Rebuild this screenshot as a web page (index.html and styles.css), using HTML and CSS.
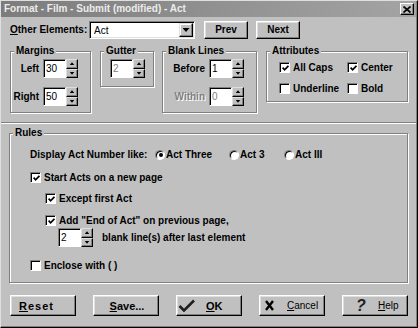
FILE: index.html
```html
<!DOCTYPE html>
<html>
<head>
<meta charset="utf-8">
<title>Format - Film - Submit (modified) - Act</title>
<link rel="stylesheet" href="styles.css">
</head>
<body>
<div class="window">
  <div class="titlebar">
    <span class="title">Format - Film - Submit (modified) - Act</span>
    <span class="close"><svg width="8" height="7" viewBox="0 0 8 7"><path d="M0.5 0.5 L7.5 6.5 M7.5 0.5 L0.5 6.5" stroke="#000" stroke-width="1.7" fill="none"/></svg></span>
  </div>

  <div class="top">
    <div class="row1">
      <span class="lbl-other"><u>O</u>ther Elements:</span>
      <div class="combo"><span class="combo-text">Act</span><span class="combo-btn"><i class="tri-down big"></i></span></div>
      <button class="btn nav prev">Prev</button>
      <button class="btn nav next">Next</button>
    </div>

    <div class="groups">
      <div class="group g-margins">
        <span class="legend">Margins</span>
        <div class="frow"><span class="flabel w28">Left</span>
          <div class="spin"><span class="sp-input">30</span><span class="sp-btns"><span class="sp-b"><i class="tri-up"></i></span><span class="sp-b"><i class="tri-down"></i></span></span></div>
        </div>
        <div class="frow"><span class="flabel w28">Right</span>
          <div class="spin"><span class="sp-input">50</span><span class="sp-btns"><span class="sp-b"><i class="tri-up"></i></span><span class="sp-b"><i class="tri-down"></i></span></span></div>
        </div>
      </div>

      <div class="group g-gutter">
        <span class="legend">Gutter</span>
        <div class="spin"><span class="sp-input dis">2</span><span class="sp-btns"><span class="sp-b"><i class="tri-up"></i></span><span class="sp-b"><i class="tri-down"></i></span></span></div>
      </div>

      <div class="group g-blank">
        <span class="legend">Blank Lines</span>
        <div class="frow"><span class="flabel w42">Before</span>
          <div class="spin"><span class="sp-input">1</span><span class="sp-btns"><span class="sp-b"><i class="tri-up"></i></span><span class="sp-b"><i class="tri-down"></i></span></span></div>
        </div>
        <div class="frow"><span class="flabel w42 disabled">Within</span>
          <div class="spin"><span class="sp-input dis">0</span><span class="sp-btns"><span class="sp-b"><i class="tri-up"></i></span><span class="sp-b"><i class="tri-down"></i></span></span></div>
        </div>
      </div>

      <div class="group g-attr">
        <span class="legend">Attributes</span>
        <span class="check"><span class="cb"><svg class="tick" width="7" height="7" viewBox="0 0 7 7"><path d="M0.6 2.6 L2.6 4.8 L6.4 0.8" stroke="#000" stroke-width="1.7" fill="none"/></svg></span>All Caps</span>
        <span class="check"><span class="cb"><svg class="tick" width="7" height="7" viewBox="0 0 7 7"><path d="M0.6 2.6 L2.6 4.8 L6.4 0.8" stroke="#000" stroke-width="1.7" fill="none"/></svg></span>Center</span>
        <span class="check"><span class="cb"></span>Underline</span>
        <span class="check"><span class="cb"></span>Bold</span>
      </div>
    </div>
  </div>

  <div class="sep"></div>

  <div class="bottom">
    <div class="group g-rules">
      <span class="legend">Rules</span>
      <div class="rrow r-display">
        <span class="disp-label">Display Act Number like:</span>
        <span class="radio-item w74"><span class="rb on"></span>Act Three</span>
        <span class="radio-item w55"><span class="rb"></span>Act 3</span>
        <span class="radio-item"><span class="rb"></span>Act III</span>
      </div>
      <div class="rrow r-start">
        <span class="check"><span class="cb"><svg class="tick" width="7" height="7" viewBox="0 0 7 7"><path d="M0.6 2.6 L2.6 4.8 L6.4 0.8" stroke="#000" stroke-width="1.7" fill="none"/></svg></span>Start Acts on a new page</span>
      </div>
      <div class="rrow r-except indent">
        <span class="check"><span class="cb"><svg class="tick" width="7" height="7" viewBox="0 0 7 7"><path d="M0.6 2.6 L2.6 4.8 L6.4 0.8" stroke="#000" stroke-width="1.7" fill="none"/></svg></span>Except first Act</span>
      </div>
      <div class="rrow r-add indent">
        <span class="check"><span class="cb"><svg class="tick" width="7" height="7" viewBox="0 0 7 7"><path d="M0.6 2.6 L2.6 4.8 L6.4 0.8" stroke="#000" stroke-width="1.7" fill="none"/></svg></span>Add "End of Act" on previous page,</span>
      </div>
      <div class="rrow r-spin">
        <div class="spin"><span class="sp-input">2</span><span class="sp-btns"><span class="sp-b"><i class="tri-up"></i></span><span class="sp-b"><i class="tri-down"></i></span></span></div>
        <span class="after">blank line(s) after last element</span>
      </div>
      <div class="rrow r-enclose">
        <span class="check"><span class="cb"></span>Enclose with ( )</span>
      </div>
    </div>

    <div class="buttons">
      <button class="btn big b-reset"><span><u>R</u>eset</span></button>
      <button class="btn big b-save"><span><u>S</u>ave...</span></button>
      <button class="btn big b-ok"><svg class="ico-ok" width="17" height="13" viewBox="0 0 17 13"><path d="M1.5 7 L6 11.5 L16 1.5" stroke="#202020" stroke-width="2.6" fill="none" stroke-linejoin="miter"/></svg><span><u>O</u>K</span></button>
      <button class="btn big b-cancel"><svg class="ico-x" width="9" height="11" viewBox="0 0 9 11"><path d="M1 1 L8 10 M8 1 L1 10" stroke="#000" stroke-width="2.4" fill="none"/></svg><span class="thin"><u>C</u>ancel</span></button>
      <button class="btn big b-help"><span class="qmark">?</span><span class="thin"><u>H</u>elp</span></button>
    </div>
  </div>
</div>
</body>
</html>
```

FILE: styles.css
```css
* { box-sizing: border-box; }
html, body { margin: 0; padding: 0; }
body {
  background: #c0c0c0;
  font-family: "Liberation Sans", Arial, sans-serif;
  font-size: 10px;
  font-weight: bold;
  color: #000;
  line-height: 12px;
}
u { text-decoration: underline; text-underline-offset: 1px; }

.window {
  width: 418px;
  height: 328px;
  background: #c0c0c0;
  border-top: 1px solid #dfdfdf;
  border-left: 1px solid #dfdfdf;
  border-right: 1px solid #000;
  border-bottom: 1px solid #000;
  box-shadow: inset -1px -1px 0 #808080;
  display: flex;
  flex-direction: column;
  overflow: hidden;
}

/* title bar */
.titlebar {
  height: 16px;
  margin-right: 1px;
  background: linear-gradient(to right, #7c7c7c, #a4a4a4);
  display: flex;
  align-items: center;
  justify-content: space-between;
  padding: 0 2px 0 3px;
}
.title { color: #ececec; font-size: 10px; font-weight: bold; }
.close {
  width: 14px; height: 12px;
  background: #c0c0c0;
  border: 1px solid;
  border-color: #fff #000 #000 #fff;
  box-shadow: inset -1px -1px 0 #808080;
  display: flex; align-items: center; justify-content: center;
}

/* top area */
.top { padding: 4px 0 0 9px; }
.row1 { display: flex; align-items: center; height: 18px; }
.lbl-other { width: 79px; }

.combo {
  width: 106px; height: 18px;
  background: #fff;
  border: 1px solid;
  border-color: #808080 #fff #fff #808080;
  box-shadow: inset 1px 1px 0 #000, inset -1px -1px 0 #dfdfdf;
  padding: 1px;
  display: flex;
}
.combo-text { flex: 1; padding-left: 3px; font-weight: normal; line-height: 14px; padding-top: 1px; }
.combo-btn {
  width: 14px; height: 14px;
  background: #c0c0c0;
  border: 1px solid;
  border-color: #dfdfdf #000 #000 #dfdfdf;
  box-shadow: inset -1px -1px 0 #808080, inset 1px 1px 0 #fff;
  display: flex; align-items: center; justify-content: center;
}

.btn {
  font-family: "Liberation Sans", Arial, sans-serif;
  font-size: 10px;
  font-weight: bold;
  color: #000;
  background: #c0c0c0;
  border: 1px solid;
  border-color: #fff #000 #000 #fff;
  box-shadow: inset -1px -1px 0 #808080, inset 1px 1px 0 #dfdfdf;
  padding: 0;
  margin: 0;
  line-height: 12px;
}
.nav { width: 44px; height: 18px; }
.prev { margin-left: 9px; }
.next { margin-left: 8px; }

/* triangles */
.tri-up, .tri-down { display: block; width: 5px; height: 3px; background: #000; }
.tri-up { clip-path: polygon(50% 0, 100% 100%, 0 100%); }
.tri-down { clip-path: polygon(0 0, 100% 0, 50% 100%); }
.tri-down.big { width: 7px; height: 4px; }

/* groups */
.groups { display: flex; align-items: flex-start; margin-top: 12px; }
.group {
  position: relative;
  border: 1px solid #808080;
  box-shadow: 1px 1px 0 #fff, inset 1px 1px 0 #fff;
}
.legend {
  position: absolute;
  top: -7px;
  left: 3px;
  padding: 0 2px;
  background: #c0c0c0;
  line-height: 12px;
}
.g-margins { width: 81px; height: 62px; padding-top: 7px; display: flex; flex-direction: column; gap: 9px; }
.g-gutter { width: 54px; height: 36px; margin-left: 9px; padding: 7px 0 0 9px; }
.g-blank { width: 95px; height: 62px; margin-left: 8px; padding-top: 7px; display: flex; flex-direction: column; gap: 9px; }
.g-attr {
  width: 142px; height: 51px; margin-left: 9px;
  padding: 9px 0 0 12px;
  display: grid;
  grid-template-columns: 68px auto;
  grid-auto-rows: 13px;
  row-gap: 8px;
}

.frow { display: flex; align-items: center; }
.flabel { text-align: right; margin-right: 4px; }
.w28 { width: 28px; }
.w42 { width: 42px; }
.disabled { color: #808080; text-shadow: 1px 1px 0 #fff; }

/* spin */
.spin { display: flex; height: 19px; }
.sp-input {
  width: 23px; height: 19px;
  background: #fff;
  border: 1px solid;
  border-color: #808080 #fff #fff #808080;
  box-shadow: inset 1px 1px 0 #000;
  font-weight: normal;
  padding: 2px 0 0 2px;
  line-height: 14px;
}
.sp-input.dis { color: #808080; }
.sp-btns { width: 12px; height: 19px; display: flex; flex-direction: column; }
.sp-b {
  flex: 1;
  background: #c0c0c0;
  border: 1px solid;
  border-color: #dfdfdf #000 #000 #dfdfdf;
  box-shadow: inset -1px -1px 0 #808080;
  display: flex; align-items: center; justify-content: center;
}

/* checkbox */
.check { display: flex; align-items: center; height: 13px; white-space: nowrap; }
.cb {
  width: 11px; height: 11px;
  flex: none;
  background: #fff;
  border: 1px solid;
  border-color: #808080 #fff #fff #808080;
  box-shadow: inset 1px 1px 0 #000;
  margin-right: 3px;
  display: flex; align-items: center; justify-content: center;
  padding: 1px 0 0 1px;
}
.tick { display: block; }

/* radio */
.radio-item { display: flex; align-items: center; }
.w74 { width: 74px; }
.w55 { width: 55px; }
.rb {
  width: 10px; height: 10px;
  border-radius: 50%;
  background: #fff;
  border: 1px solid;
  border-color: #808080 #fff #fff #808080;
  box-shadow: inset 1px 1px 0 #000;
  margin-right: 1px;
  display: flex; align-items: center; justify-content: center;
  flex: none;
}
.rb.on::after {
  content: "";
  width: 4px; height: 4px;
  border-radius: 50%;
  background: #000;
  margin: 1px 0 0 1px;
}

/* separator */
.sep {
  height: 2px;
  margin: 9px 1px 0 0;
  border-top: 1px solid #808080;
  border-bottom: 1px solid #fff;
}

/* bottom */
.bottom { padding-left: 8px; }
.g-rules {
  width: 399px; height: 150px;
  margin-top: 9px;
  padding: 14px 0 0 20px;
}
.rrow { display: flex; align-items: center; height: 13px; }
.disp-label { width: 125px; }
.r-start { margin-top: 10px; }
.r-except { margin-top: 8px; }
.r-add { margin-top: 9px; }
.indent { margin-left: 15px; }
.r-spin { margin-top: 1px; margin-left: 28px; height: 19px; }
.after { margin-left: 9px; }
.r-enclose { margin-top: 12px; }

.buttons {
  display: flex;
  justify-content: space-between;
  width: 398px;
  margin: 12px 0 0 1px;
}
.big { width: 66px; height: 21px; display: flex; align-items: center; font-size: 11px; }
.b-reset { justify-content: flex-start; padding-left: 8px; letter-spacing: 1px; }
.b-save { justify-content: center; padding-left: 2px; }
.b-ok { padding-left: 1px; }
.ico-ok { display: block; margin-right: 11px; }
.b-cancel { padding-left: 5px; }
.ico-x { display: block; margin-right: 13px; }
.b-help { padding-left: 13px; }
.qmark { font-size: 16px; font-style: italic; font-weight: bold; color: #202020; width: 10px; margin-right: 12px; line-height: 16px; }
.thin { font-weight: normal; font-size: 10px; }
```
